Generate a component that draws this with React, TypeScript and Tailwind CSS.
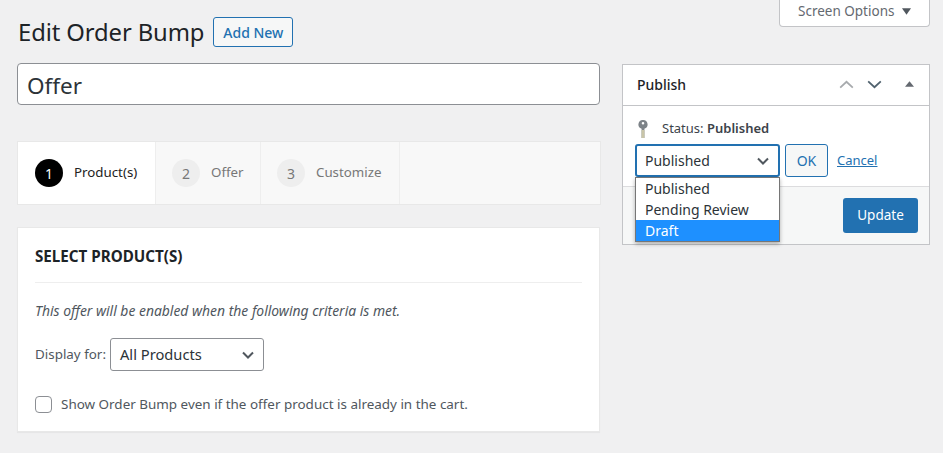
const chevron = (
  <svg viewBox="0 0 12 8" className="h-[8px] w-[12px]" fill="none" stroke="#50575e" strokeWidth="2">
    <path d="M1 1.5 6 6.5 11 1.5" />
  </svg>
);

function Step({ n, label, active }: { n: number; label: string; active?: boolean }) {
  return (
    <div className={`flex h-full items-center border-r border-[#eeeeee] ${active ? "w-[138px] bg-white pl-[17px]" : n === 2 ? "w-[105px] pl-[16px]" : "w-[139px] pl-[16px]"}`}>
      <span className={`flex size-[28px] items-center justify-center rounded-full text-[14px] ${active ? "bg-black text-white" : "bg-[#eeeeee] text-[#777777]"}`}>{n}</span>
      <span className={`ml-[11px] text-[13.3px] ${active ? "text-[#222222]" : "text-[#777777]"}`}>{label}</span>
    </div>
  );
}

export default function App() {
  return (
    <div className="flex h-[453px] w-[943px] overflow-hidden bg-[#f0f0f1] pl-[17px] font-['Noto_Sans','Open_Sans',sans-serif] text-[#3c434a]">
      <div className="w-[583px] shrink-0">
        <div className="mt-[17px] flex h-[30px] items-center">
          <h1 className="ml-[1px] text-[23.8px] leading-[30px] tracking-[-0.1px] text-[#1d2327]">Edit Order Bump</h1>
          <button className="ml-[9px] h-[30px] w-[80px] rounded-[3px] border border-[#2271b1] bg-[#f6f7f7] text-[14px] font-medium text-[#2271b1]">Add New</button>
        </div>
        <div className="mt-[16px] flex h-[42px] items-center rounded-[4px] border border-[#8c8f94] bg-white pt-[3px] pl-[9px] text-[22.5px] text-[#2c3338]">Offer</div>

        <div className="mt-[36px] flex h-[64px] w-[584px] border border-[#e8e8e8] bg-[#f8f8f8]">
          <Step n={1} label="Product(s)" active />
          <Step n={2} label="Offer" />
          <Step n={3} label="Customize" />
        </div>

        <div className="mt-[22px] h-[205px] border border-[#e8e8e8] bg-white px-[17px] shadow-[0_1px_1px_rgba(0,0,0,0.04)]">
          <h2 className="mt-[16px] text-[15.2px] leading-[24px] font-bold text-[#1d2327]">SELECT PRODUCT(S)</h2>
          <div className="mt-[14px] border-t border-[#eeeeee]" />
          <p className="mt-[18px] text-[13.9px] leading-[20px] text-[#50575e] italic">This offer will be enabled when the following criteria is met.</p>
          <div className="mt-[17px] flex items-center">
            <span className="text-[13.4px] text-[#50575e]">Display for:</span>
            <div className="ml-[4px] flex h-[33px] w-[154px] items-center justify-between rounded-[3px] border border-[#8c8f94] pr-[9px] pl-[9px] text-[14.7px] text-[#2c3338]">
              All Products
              {chevron}
            </div>
          </div>
          <label className="mt-[23px] flex items-center">
            <span className="size-[17px] rounded-[4px] border border-[#8c8f94] bg-white" />
            <span className="ml-[9px] text-[13.45px] text-[#50575e]">Show Order Bump even if the offer product is already in the cart.</span>
          </label>
        </div>
      </div>

      <div className="ml-[22px] flex w-[308px] shrink-0 flex-col">
        <div className="flex h-[27px] w-[151px] items-center self-end rounded-b-[4px] border border-t-0 border-[#c3c4c7] bg-white pb-[4px] pl-[18px] text-[13.5px] text-[#646970]">
          Screen Options
          <svg viewBox="0 0 10 7" className="ml-[8px] h-[7px] w-[9px]" fill="#50575e"><path d="M0 0h10L5 7z" /></svg>
        </div>

        <div className="relative mt-[37px] h-[181px] border border-[#c3c4c7] bg-white">
          <div className="flex h-[41px] items-center border-b border-[#c3c4c7] pr-[15px] pb-[2px] pl-[14px]">
            <span className="text-[14px] font-medium text-[#1d2327]">Publish</span>
            <svg viewBox="0 0 16 10" className="mr-[13px] ml-auto h-[9px] w-[15px]" fill="none" stroke="#a7aaad" strokeWidth="2"><path d="M1 8.5 8 2l7 6.5" /></svg>
            <svg viewBox="0 0 16 10" className="mr-[23px] h-[9px] w-[15px]" fill="none" stroke="#50626e" strokeWidth="2"><path d="M1 1.5 8 8l7-6.5" /></svg>
            <svg viewBox="0 0 10 6" className="h-[6px] w-[9px]" fill="#646970"><path d="M5 0l5 6H0z" /></svg>
          </div>
          <div className="h-[80px] px-[12px]">
            <div className="flex h-[30px] items-center pt-[16px] pl-[3px] text-[13px]">
              <svg viewBox="0 0 10 18" className="h-[18px] w-[10px]">
                <path fillRule="evenodd" d="M5 0a4.5 4.5 0 0 1 1.4 8.8V18H3.6V8.8A4.5 4.5 0 0 1 5 0zm0 2a1.3 1.3 0 1 0 0 2.6A1.3 1.3 0 0 0 5 2z" fill="#7d8388" />
                <rect x="3.6" y="10" width="2.8" height="8" fill="#c9c5a8" />
              </svg>
              <span className="ml-[14px]">Status: <b className="font-semibold">Published</b></span>
            </div>
            <div className="mt-[8px] flex items-center">
              <div className="flex h-[33px] w-[145px] items-center justify-between rounded-[3px] border-2 border-[#2271b1] pr-[9px] pl-[8px] text-[14px] text-[#2c3338]">
                Published
                {chevron}
              </div>
              <button className="ml-[5px] h-[33px] w-[43px] rounded-[3px] border border-[#2271b1] bg-[#f6f7f7] text-[14px] text-[#2271b1]">OK</button>
              <a className="ml-[9px] text-[13px] text-[#2271b1] underline">Cancel</a>
            </div>
          </div>
          <div className="flex h-[58px] justify-end border-t border-[#dcdcde] bg-[#f6f7f7] pt-[11px] pr-[11px]">
            <button className="h-[35px] w-[75px] rounded-[3px] bg-[#2271b1] text-[13.5px] text-white">Update</button>
          </div>
          <ul className="absolute top-[112px] left-[12px] w-[145px] border border-[#767676] bg-white text-[14px] leading-[21px] text-[#2c3338] shadow-[0_2px_4px_rgba(0,0,0,0.3)]">
            <li className="pl-[9px]">Published</li>
            <li className="pl-[9px]">Pending Review</li>
            <li className="bg-[#1e90ff] pl-[9px] text-white">Draft</li>
          </ul>
        </div>
      </div>
    </div>
  );
}
